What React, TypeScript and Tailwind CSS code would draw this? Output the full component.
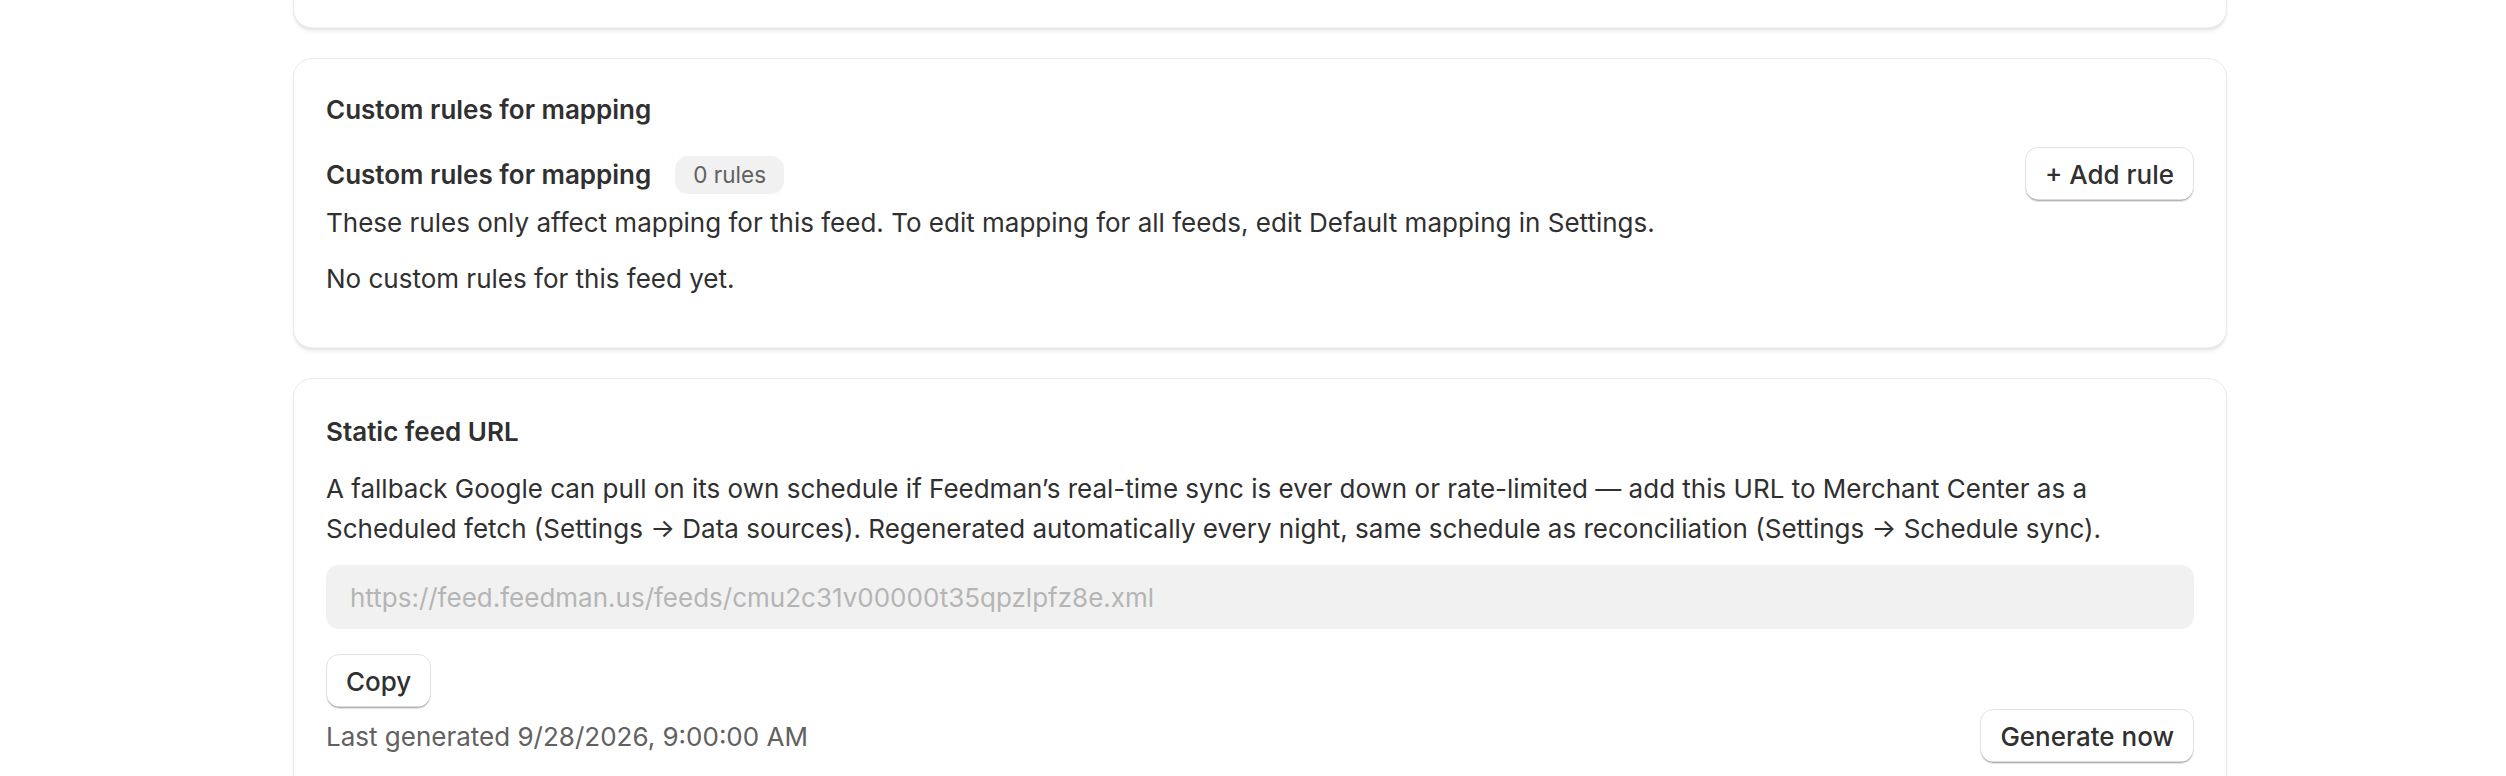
const card =
  "bg-white border-[1.6px] border-[#ebebeb] rounded-[19px] shadow-[0_2px_3px_rgba(0,0,0,0.06),inset_0_-1.6px_0_rgba(0,0,0,0.1)] p-[32px]";

const button =
  "bg-white border-[1.6px] border-[#e3e3e3] rounded-[13px] shadow-[inset_0_-1.6px_0_#b5b5b5] h-[55px] px-[19px] text-[26px] font-medium text-[#303030] leading-none";

export default function App() {
  return (
    <div className="min-h-screen bg-white font-['Inter',sans-serif] text-[#303030] overflow-hidden">
      <div className="pl-[293px] pr-[279px] flex flex-col gap-[28px]">
        {/* card above, only its bottom edge in view */}
        <div className={`${card} h-[200px] -mt-[170px]`} />

        <div className={card}>
          <h2 className="text-[26px] leading-[38px] font-semibold">Custom rules for mapping</h2>
          <div className="mt-[18px] flex items-center justify-between">
            <div className="flex items-center gap-[24px]">
              <h3 className="text-[26px] leading-[38px] font-semibold">Custom rules for mapping</h3>
              <span className="h-[38px] px-[18px] flex items-center rounded-[13px] bg-[#f1f1f1] text-[#616161] text-[22.5px]">
                0 rules
              </span>
            </div>
            <button className={button}>+ Add rule</button>
          </div>
          <p className="mt-[1px] text-[26px] leading-[40px]">
            These rules only affect mapping for this feed. To edit mapping for all feeds, edit Default mapping in Settings.
          </p>
          <p className="mt-[16px] mb-[18px] text-[26px] leading-[40px]">No custom rules for this feed yet.</p>
        </div>

        <div className={card}>
          <h2 className="mt-[2px] text-[26px] leading-[38px] font-semibold">Static feed URL</h2>
          <p className="mt-[18px] text-[26px] leading-[40px]">
            A fallback Google can pull on its own schedule if Feedman’s real-time sync is ever down or rate-limited — add this URL to
            Merchant Center as a Scheduled fetch (Settings → Data sources). Regenerated automatically every night, same schedule as
            reconciliation (Settings → Schedule sync).
          </p>
          <div className="mt-[16px] h-[64px] rounded-[13px] bg-[#f1f1f1] px-[24px] flex items-center text-[26px] text-[#b5b5b5]">
            https://feed.feedman.us/feeds/cmu2c31v00000t35qpzlpfz8e.xml
          </div>
          <div className="mt-[25px]">
            <button className={button}>Copy</button>
          </div>
          <div className="flex items-center justify-between">
            <span className="text-[26px] leading-[38px] text-[#616161]">Last generated 9/28/2026, 9:00:00 AM</span>
            <button className={button}>Generate now</button>
          </div>
        </div>
      </div>
    </div>
  );
}
